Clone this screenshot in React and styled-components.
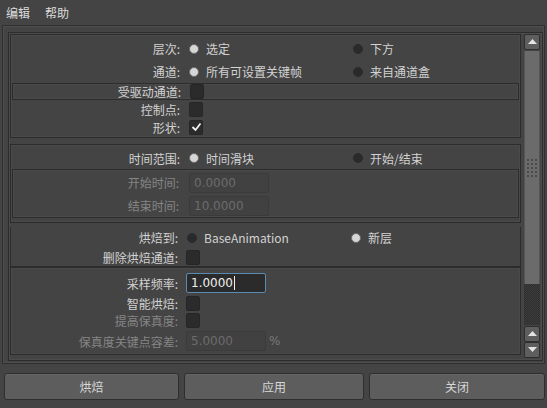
import React from "react";
import styled, { createGlobalStyle } from "styled-components";

const Global = createGlobalStyle`
  html, body {
    margin: 0;
    padding: 0;
    background: #444444;
  }
  body {
    font-family: "Noto Sans CJK SC", "Noto Sans", sans-serif;
    font-size: 12px;
    color: #d2d2d2;
  }
`;

const Window = styled.div`
  width: 547px;
  height: 408px;
  background: #444444;
  display: flex;
  flex-direction: column;
  overflow: hidden;
`;

const MenuBar = styled.div`
  height: 25px;
  display: flex;
  align-items: center;
  gap: 15px;
  padding: 0 6px;
  box-sizing: border-box;
  font-size: 12px;
  color: #dcdcdc;
`;

const Frame = styled.div`
  margin: 0 2px;
  height: 339px;
  box-sizing: border-box;
  border: 1px solid #2f2f2f;
  box-shadow: inset 0 0 0 1px #4e4e4e;
  padding: 6px 1px 2px 5px;
  display: flex;
`;

const ScrollView = styled.div`
  flex: 1;
  display: flex;
  border: 1px solid #2c2c2c;
  box-shadow: inset 0 0 0 1px #4c4c4c;
  padding: 1px 1px 2px 1px;
  overflow: hidden;
`;

const Content = styled.div`
  flex: 1;
  display: flex;
  flex-direction: column;
  overflow: hidden;
  margin-right: 3px;
`;

const Section = styled.div`
  flex-shrink: 0;
  border: 1px solid #2c2c2c;
  box-shadow: inset 0 0 0 1px #4a4a4a;
  padding: ${(p) => p.$pad || "2px 0 1px"};
  margin-bottom: ${(p) => p.$mb || 0}px;
  display: flex;
  flex-direction: column;
`;

const InnerFrame = styled.div`
  margin: 0 1px;
  border: 1px solid #2c2c2c;
  box-shadow: inset 0 0 0 1px #4a4a4a;
  padding: 1px 0 0;
`;

const Row = styled.div`
  display: flex;
  align-items: center;
  height: ${(p) => p.$h || 23}px;
  flex-shrink: 0;
`;

const BoxedRow = styled(Row)`
  margin: 0 1px;
  border: 1px solid #2c2c2c;
  box-shadow: inset 0 0 0 1px #4a4a4a;
  box-sizing: border-box;
`;

const Label = styled.span`
  width: ${(p) => p.$w || 169}px;
  flex-shrink: 0;
  text-align: right;
  white-space: nowrap;
  color: ${(p) => (p.$dim ? "#858585" : "#d2d2d2")};
`;

const Controls = styled.div`
  display: flex;
  align-items: center;
  margin-left: ${(p) => p.$ml || 9}px;
`;

const Option = styled.div`
  display: flex;
  align-items: center;
  gap: 7px;
  width: ${(p) => p.$w || "auto"};
  white-space: nowrap;
`;

const Dot = styled.span`
  width: 10px;
  height: 10px;
  border-radius: 50%;
  box-sizing: border-box;
  flex-shrink: 0;
  background: ${(p) => (p.$on ? "#d6d6d6" : "#2a2a2a")};
  border: 1px solid ${(p) => (p.$on ? "#6a6a6a" : "#2a2a2a")};
`;

const Check = styled.span`
  width: 14px;
  height: 15px;
  box-sizing: border-box;
  background: #2b2b2b;
  border: 1px solid #262626;
  border-radius: 2px;
  display: flex;
  align-items: center;
  justify-content: center;
`;

const Field = styled.div`
  width: ${(p) => p.$w || 80}px;
  height: 20px;
  box-sizing: border-box;
  padding: 0 4px;
  display: flex;
  align-items: center;
  border-radius: 2px;
  font-family: "DejaVu Sans", "Noto Sans", sans-serif;
  font-size: 12px;
  background: ${(p) => (p.$active ? "#2b2b2b" : "#414141")};
  border: 1px solid ${(p) => (p.$active ? "#5a8ab0" : "#3b3b3b")};
  color: ${(p) => (p.$active ? "#f0f0f0" : "#6c6c6c")};
`;

const Caret = styled.span`
  width: 1px;
  height: 14px;
  background: #f0f0f0;
  margin-left: 1px;
`;

const Unit = styled.span`
  margin-left: 3px;
  color: #7a7a7a;
  font-family: "DejaVu Sans", sans-serif;
`;

const ScrollBar = styled.div`
  width: 16px;
  display: flex;
  flex-direction: column;
  margin-right: 1px;
`;

const SBtn = styled.div`
  height: 16px;
  box-sizing: border-box;
  background: #5e5e5e;
  border: 1px solid #2e2e2e;
  border-radius: 2px;
  display: flex;
  align-items: center;
  justify-content: center;
  flex-shrink: 0;
`;

const Thumb = styled.div`
  height: 233px;
  margin-top: 1px;
  background: #6b6b6b;
  border-left: 1px solid #555;
  border-right: 1px solid #555;
  display: flex;
  align-items: center;
  justify-content: center;
  flex-shrink: 0;
`;

const Track = styled.div`
  flex: 1;
  background-color: #383838;
  background-image: repeating-conic-gradient(#2f2f2f 0 25%, #3c3c3c 0 50%);
  background-size: 2px 2px;
  margin-bottom: 1px;
`;

const ButtonBar = styled.div`
  flex: 1;
  display: grid;
  grid-template-columns: 175px 180px 176px;
  column-gap: 5px;
  padding: 9px 3px 8px 4px;
`;

const Button = styled.div`
  background: #5d5d5d;
  border: 1px solid #2e2e2e;
  box-shadow: inset 0 1px 0 #666;
  border-radius: 3px;
  display: flex;
  align-items: center;
  justify-content: center;
  color: #d8d8d8;
  font-size: 12px;
`;

const Tri = ({ down }) => (
  <svg width="9" height="6" viewBox="0 0 9 6">
    <polygon points={down ? "0,0 9,0 4.5,5" : "0,5 9,5 4.5,0"} fill="#e4e4e4" />
  </svg>
);

const Grip = () => (
  <svg width="12" height="20" viewBox="0 0 12 20">
    {[0, 1, 2].map((c) =>
      [0, 1, 2, 3, 4].map((r) => (
        <rect key={`${c}-${r}`} x={c * 4 + 1} y={r * 4 + 1} width="2" height="2" fill="#4a4a4a" />
      ))
    )}
  </svg>
);

const Tick = () => (
  <svg width="11" height="10" viewBox="0 0 11 10">
    <polyline points="1.5,5 4.5,8 9.5,1.5" fill="none" stroke="#f2f2f2" strokeWidth="1.8" />
  </svg>
);

const Radio = ({ on, label, w }) => (
  <Option $w={w}>
    <Dot $on={on} />
    <span>{label}</span>
  </Option>
);

export default function App() {
  return (
    <Window>
      <Global />
      <MenuBar>
        <span>编辑</span>
        <span>帮助</span>
      </MenuBar>
      <Frame>
        <ScrollView>
          <Content>
            <Section $mb={6}>
              <Row>
                <Label>层次:</Label>
                <Controls>
                  <Radio on label="选定" w="164px" />
                  <Radio label="下方" />
                </Controls>
              </Row>
              <Row>
                <Label>通道:</Label>
                <Controls>
                  <Radio on label="所有可设置关键帧" w="164px" />
                  <Radio label="来自通道盒" />
                </Controls>
              </Row>
              <BoxedRow $h={17}>
                <Label $w={168}>受驱动通道:</Label>
                <Controls>
                  <Check />
                </Controls>
              </BoxedRow>
              <Row $h={18}>
                <Label>控制点:</Label>
                <Controls>
                  <Check />
                </Controls>
              </Row>
              <Row $h={18}>
                <Label>形状:</Label>
                <Controls>
                  <Check>
                    <Tick />
                  </Check>
                </Controls>
              </Row>
            </Section>

            <Section $pad="2px 0 4px" $mb={4}>
              <Row $h={22}>
                <Label>时间范围:</Label>
                <Controls>
                  <Radio on label="时间滑块" w="164px" />
                  <Radio label="开始/结束" />
                </Controls>
              </Row>
              <InnerFrame>
                <Row>
                  <Label $w={166} $dim>开始时间:</Label>
                  <Controls $ml={10}>
                    <Field>0.0000</Field>
                  </Controls>
                </Row>
                <Row>
                  <Label $w={166} $dim>结束时间:</Label>
                  <Controls $ml={10}>
                    <Field>10.0000</Field>
                  </Controls>
                </Row>
              </InnerFrame>
            </Section>

            <Section $pad="0" style={{ borderTop: "none", boxShadow: "none", borderBottom: "1px solid #2c2c2c" }}>
              <Row $h={21}>
                <Label $w={167}>烘焙到:</Label>
                <Controls $ml={9}>
                  <Radio label="BaseAnimation" w="164px" />
                  <Radio on label="新层" />
                </Controls>
              </Row>
              <Row $h={18}>
                <Label $w={167}>删除烘焙通道:</Label>
                <Controls $ml={8}>
                  <Check />
                </Controls>
              </Row>
            </Section>

            <Section $pad="3px 0 1px">
              <Row $h={24}>
                <Label $w={167}>采样频率:</Label>
                <Controls $ml={8}>
                  <Field $active>
                    1.0000
                    <Caret />
                  </Field>
                </Controls>
              </Row>
              <Row $h={17}>
                <Label $w={167}>智能烘焙:</Label>
                <Controls $ml={8}>
                  <Check />
                </Controls>
              </Row>
              <Row $h={17}>
                <Label $w={167} $dim>提高保真度:</Label>
                <Controls $ml={8}>
                  <Check />
                </Controls>
              </Row>
              <Row $h={24}>
                <Label $w={167} $dim>保真度关键点容差:</Label>
                <Controls $ml={8}>
                  <Field>5.0000</Field>
                  <Unit>%</Unit>
                </Controls>
              </Row>
            </Section>
          </Content>
          <ScrollBar>
            <SBtn>
              <Tri />
            </SBtn>
            <Thumb>
              <Grip />
            </Thumb>
            <Track />
            <SBtn>
              <Tri />
            </SBtn>
            <SBtn>
              <Tri down />
            </SBtn>
          </ScrollBar>
        </ScrollView>
      </Frame>
      <ButtonBar>
        <Button>烘焙</Button>
        <Button>应用</Button>
        <Button>关闭</Button>
      </ButtonBar>
    </Window>
  );
}
